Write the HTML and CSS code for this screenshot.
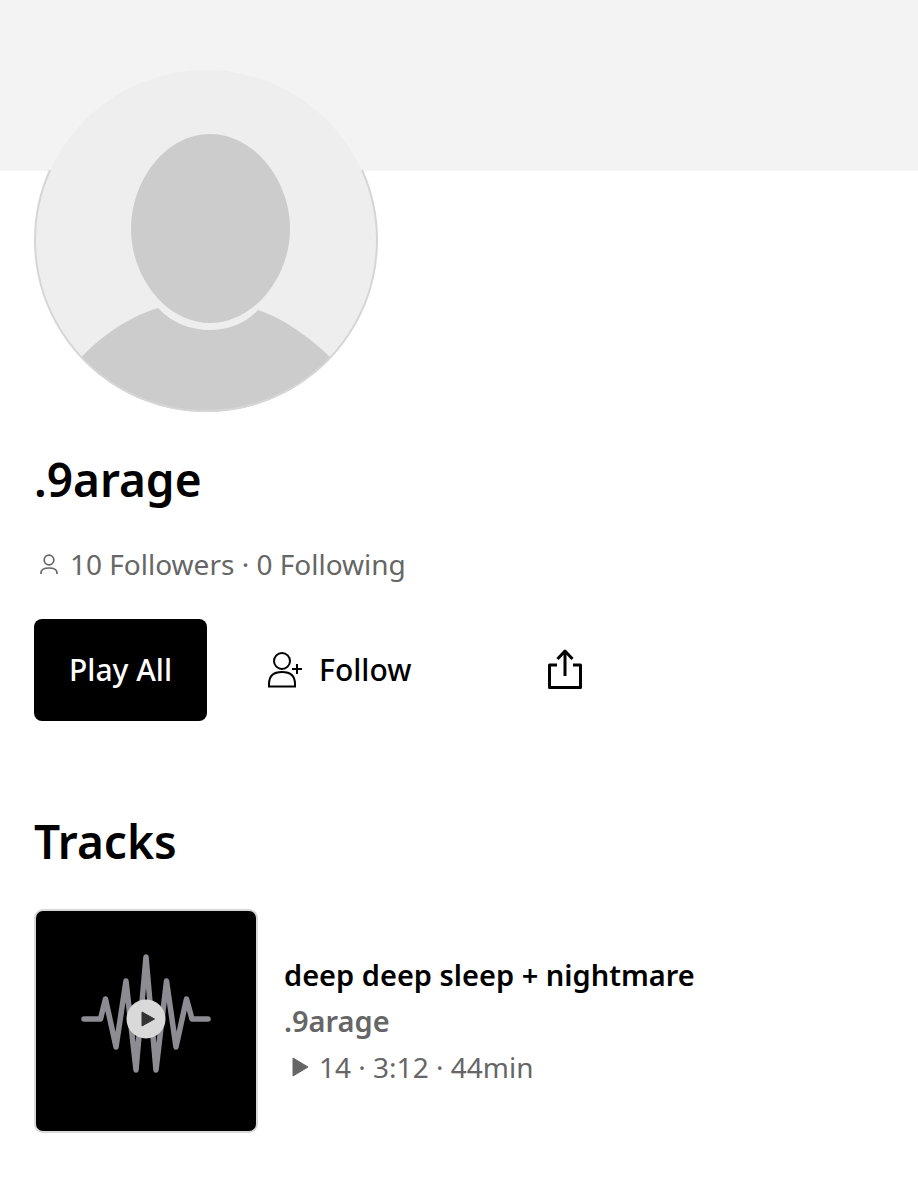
FILE: index.html
```html
<!DOCTYPE html>
<html lang="en">
<head>
<meta charset="utf-8">
<meta name="viewport" content="width=device-width, initial-scale=1">
<title>.9arage</title>
<link rel="stylesheet" href="styles.css">
</head>
<body>
<div class="banner"></div>
<main class="profile">
  <svg class="avatar" viewBox="0 0 344 344" role="img" aria-label="Profile picture">
    <defs><clipPath id="disc"><circle cx="172" cy="172" r="171"/></clipPath></defs>
    <g clip-path="url(#disc)">
      <rect width="344" height="344" fill="#eee"/>
      <path d="M36 301C62 269 94 248 124 239C149 267 199 269 224 241C254 251 287 276 310 303V344H36Z" fill="#ccc"/>
      <path d="M176 65C220 65 256 111 256 160C256 208 220 254 176 254C132 254 97 208 97 160C97 111 132 65 176 65Z" fill="#ccc"/>
    </g>
    <path d="M16 101A171 171 0 1 0 328 101" fill="none" stroke="#d6d6d6" stroke-width="2"/>
  </svg>
  <h1 class="title">.9arage</h1>
  <p class="stats">
    <svg class="stats-icon" viewBox="0 0 22 24" aria-hidden="true"><g fill="none" stroke="#666" stroke-width="1.700"><circle cx="11" cy="8" r="4.800"/><path d="M3 22V21C3 17 6 16 11 16S19 17 19 21V22"/></g></svg>
    <span>10 Followers · 0 Following</span>
  </p>
  <div class="actions">
    <button class="play-all" type="button">Play All</button>
    <button class="follow" type="button">
      <svg class="follow-icon" viewBox="0 0 36 36" aria-hidden="true"><g fill="none" stroke="#000" stroke-width="2"><circle cx="15" cy="9" r="8"/><path d="M2 34.500V32C2 23 7 20 15 20S28 23 28 32V34.500ZM25 17H35M30 12V22"/></g></svg>
      Follow
    </button>
    <button class="share" type="button" aria-label="Share">
      <svg class="share-icon" viewBox="0 0 36 42" aria-hidden="true"><path d="M10 16H2.500V38.500H33.500V16H26M18 27V3M10.500 10L18 2L25.500 10" fill="none" stroke="#000" stroke-width="3" stroke-linejoin="round"/></svg>
    </button>
  </div>
  <h2 class="title">Tracks</h2>
  <article class="track">
    <button class="cover" type="button" aria-label="Play deep deep sleep + nightmare">
      <svg viewBox="0 0 220 220" aria-hidden="true">
        <path d="M48 108H64.500L69.500 88L80 136L90 70L100 159L110 46L120 159L130.500 70L140 136L150.500 88L156 108H172" fill="none" stroke="#8e8c93" stroke-width="5.500" stroke-linecap="round" stroke-linejoin="round"/>
        <circle cx="110" cy="108" r="19.500" fill="#d9d9d9"/>
        <path d="M106 101V115L118.500 108Z" fill="#333" stroke="#333" stroke-linejoin="round"/>
      </svg>
    </button>
    <div class="details">
      <h3 class="name">deep deep sleep + nightmare</h3>
      <a class="artist" href="#">.9arage</a>
      <p class="meta">
        <svg class="meta-icon" viewBox="0 0 18 20" aria-hidden="true"><path d="M2 1V19L17 10Z" fill="#666" stroke="#666" stroke-linejoin="round"/></svg>
        <span>14 · 3:12 · 44min</span>
      </p>
    </div>
  </article>
</main>
</body>
</html>
```
FILE: styles.css
```css
* { box-sizing: border-box; }
body { margin: 0; background: #fff; color: #000; font: 28px/46px "Noto Sans", sans-serif; }
h1, h2, h3, p { margin: 0; }
svg { display: block; }
button { border: 0; padding: 0; background: none; color: inherit; font: inherit; cursor: pointer; }
.banner { height: 171px; background: #f3f3f3; }
.profile { padding: 0 34px 68px; }
.avatar { position: relative; width: 344px; height: 344px; margin-top: -102px; }
.title { font-size: 46px; line-height: 64px; font-weight: 600; }
h1.title { margin-top: 34px; }
h2.title { margin-top: 88px; }
.stats { display: flex; align-items: center; gap: 10px; margin-top: 30px; padding-left: 4px; color: #666; }
.stats-icon { width: 22px; height: 24px; }
.actions { display: flex; align-items: center; margin-top: 32px; font-size: 30px; font-weight: 500; }
.play-all { padding: 28px 35px; border-radius: 8px; background: #000; color: #fff; }
.follow { display: flex; align-items: center; gap: 16px; margin-left: 60px; }
.follow-icon { width: 36px; height: 36px; }
.share { margin-left: 136px; }
.share-icon { width: 36px; height: 42px; }
.track { display: flex; align-items: center; gap: 26px; margin-top: 36px; }
.cover { width: 224px; flex: none; border: 2px solid #d8d8d8; border-radius: 9px; background: #000; overflow: hidden; }
.name, .artist { font-size: 29px; font-weight: 600; }
.artist { display: block; color: #666; text-decoration: none; }
.meta { display: flex; align-items: center; gap: 10px; padding-left: 7px; color: #666; }
.meta-icon { width: 18px; height: 20px; }
```
